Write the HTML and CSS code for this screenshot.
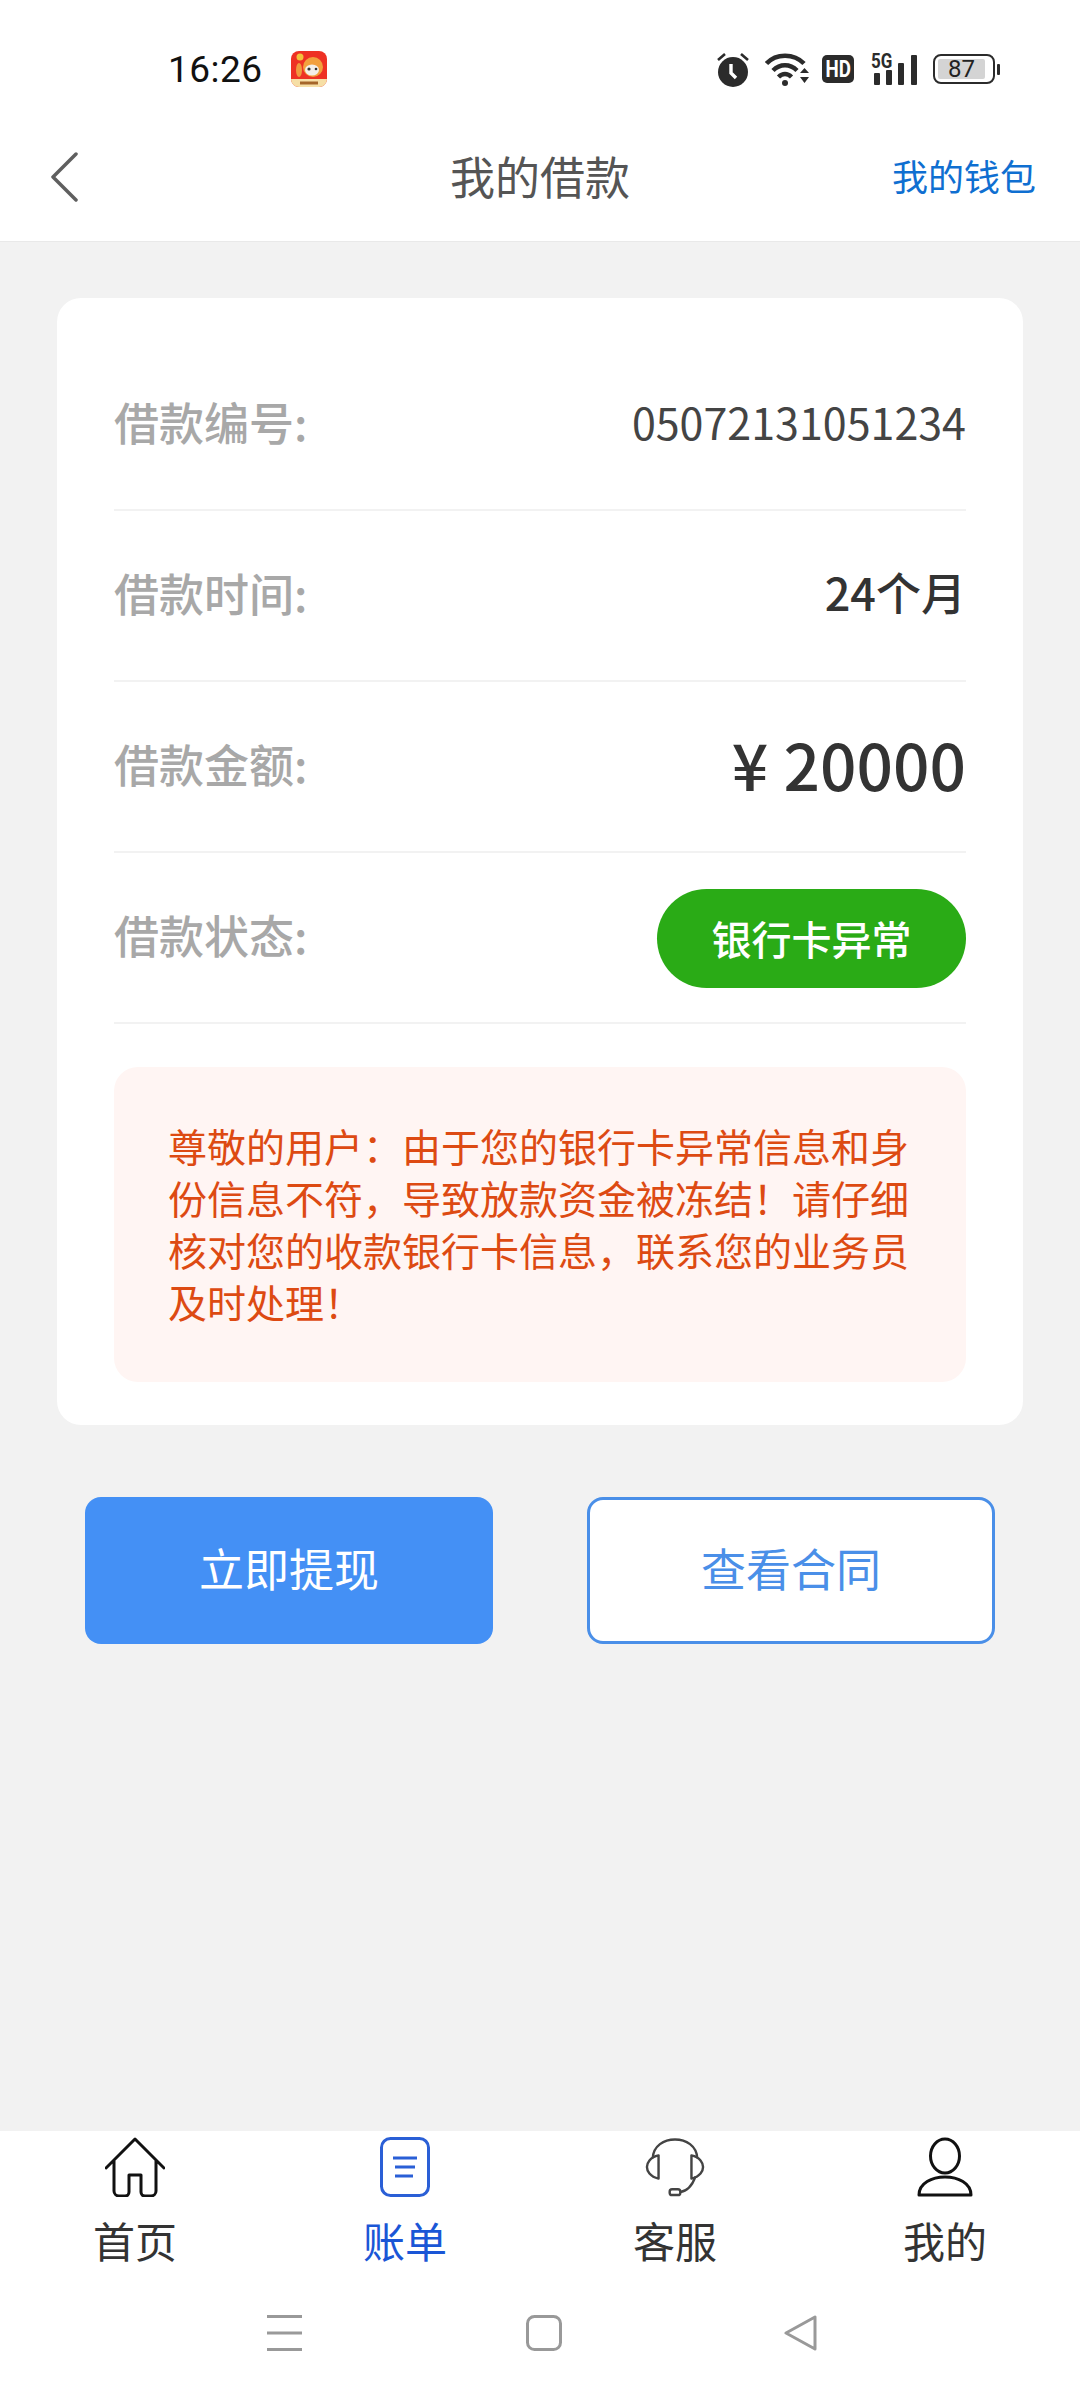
FILE: index.html
```html
<!DOCTYPE html>
<html lang="zh-CN">
<head>
<meta charset="utf-8">
<title>我的借款</title>
<link rel="stylesheet" href="styles.css">
</head>
<body>
<div class="page">
  <div class="status">
    <span class="time">16:26</span>
    <svg class="appicon" viewBox="0 0 36 36">
      <defs><clipPath id="r"><rect width="36" height="36" rx="8"/></clipPath></defs>
      <g clip-path="url(#r)">
        <rect width="36" height="36" fill="#ee3124"/>
        <rect y="28" width="36" height="8" fill="#f6dfa6"/>
        <circle cx="9" cy="6" r="3.5" fill="#f3c23c"/>
        <ellipse cx="8" cy="19" rx="3" ry="7" fill="#f09a3e"/>
        <circle cx="22" cy="16" r="10" fill="#f2a03d"/>
        <ellipse cx="21" cy="19" rx="7" ry="5.5" fill="#f4efe8"/>
        <circle cx="18" cy="18" r="1.6" fill="#333"/>
        <circle cx="25" cy="18" r="1.3" fill="#333"/>
        <rect x="9" y="30.5" width="18" height="3" fill="#a5662a"/>
      </g>
    </svg>
    <span class="spacer"></span>
    <svg class="alarm" viewBox="0 0 32 36">
      <path d="M1 9l7-6M31 9l-7-6" stroke="#2b2b2b" stroke-width="2.6" fill="none"/>
      <circle cx="16" cy="21" r="15" fill="#2b2b2b"/>
      <path d="M14 13v9l5 5" stroke="#fff" stroke-width="3.4" fill="none"/>
    </svg>
    <svg class="wifi" viewBox="0 0 45 34">
      <path d="M1.500 11.500C11 1 29 1 39 11.500" stroke="#2b2b2b" stroke-width="4.500" fill="none"/>
      <path d="M8 18.500C15 11.500 25 11.500 32 18.500" stroke="#2b2b2b" stroke-width="4.500" fill="none"/>
      <path d="M13.500 25C17.500 21 22.500 21 26.500 25" stroke="#2b2b2b" stroke-width="4.500" fill="none"/>
      <circle cx="20" cy="31" r="3" fill="#2b2b2b"/>
      <path d="M35 21l4.500-5 4.500 5zM35 25h9l-4.500 6z" fill="#2b2b2b"/>
    </svg>
    <span class="hd"><span class="hd-text">HD</span></span>
    <span class="signal">
      <span class="fiveg">5G</span>
      <svg class="bars" viewBox="0 0 43 32">
        <rect x="0" y="20" width="6" height="12" rx="1" fill="#2b2b2b"/>
        <rect x="12" y="17" width="6" height="15" rx="1" fill="#2b2b2b"/>
        <rect x="24" y="10" width="6" height="22" rx="1" fill="#2b2b2b"/>
        <rect x="37" y="2" width="6" height="30" rx="1" fill="#2b2b2b"/>
      </svg>
    </span>
    <span class="battery"><span class="level">87</span></span>
    <span class="nub"></span>
  </div>

  <header class="topbar">
    <svg class="back" viewBox="0 0 28 50"><path d="M26 2L3 25l23 23" fill="none" stroke="#5f5f5f" stroke-width="3.500" stroke-linecap="round" stroke-linejoin="round"/></svg>
    <h1 class="title">我的借款</h1>
    <a class="wallet">我的钱包</a>
  </header>

  <main class="content">
    <section class="card">
      <div class="row"><span class="label">借款编号:</span><span class="val">05072131051234</span></div>
      <div class="row"><span class="label">借款时间:</span><span class="val strong">24个月</span></div>
      <div class="row"><span class="label">借款金额:</span><span class="val amount">¥ 20000</span></div>
      <div class="row"><span class="label">借款状态:</span><span class="pill">银行卡异常</span></div>
      <p class="notice">尊敬的用户：由于您的银行卡异常信息和身份信息不符，导致放款资金被冻结！请仔细核对您的收款银行卡信息，联系您的业务员及时处理！</p>
    </section>
    <div class="actions">
      <button class="btn primary">立即提现</button>
      <button class="btn outline">查看合同</button>
    </div>
  </main>

  <nav class="tabs">
    <div class="tab">
      <svg class="tabicon" viewBox="0 0 60 60"><path d="M1 31L30 2l29 29M9 24v30a5 5 0 0 0 5 5h6a4 4 0 0 0 4-4V38h12v17a4 4 0 0 0 4 4h6a5 5 0 0 0 5-5V24" fill="none" stroke="#111" stroke-width="3" stroke-linecap="round" stroke-linejoin="round"/></svg>
      <span>首页</span>
    </div>
    <div class="tab active">
      <svg class="tabicon" viewBox="0 0 60 60"><rect x="6.500" y="1.500" width="47" height="57" rx="9" fill="none" stroke="#2a5fd6" stroke-width="3"/><path d="M18 21h24M20 30h20M20 39h18" stroke="#2a5fd6" stroke-width="3"/></svg>
      <span>账单</span>
    </div>
    <div class="tab">
      <svg class="tabicon" viewBox="0 0 60 62"><path d="M7 22C8 -4 52 -4 53 22" fill="none" stroke="#444" stroke-width="2.500"/><path d="M13 19v24C4 41 1 35 1 31s3-10 12-12zM47 19v24c9-2 12-8 12-12s-3-10-12-12z" fill="none" stroke="#444" stroke-width="2.500" stroke-linejoin="round"/><path d="M51 41C48 50 42 56 35 57" fill="none" stroke="#444" stroke-width="2.500"/><rect x="24.500" y="54" width="11" height="6" rx="2.500" fill="none" stroke="#444" stroke-width="2.500"/></svg>
      <span>客服</span>
    </div>
    <div class="tab">
      <svg class="tabicon" viewBox="0 0 60 60"><ellipse cx="30" cy="19" rx="14.500" ry="17" fill="none" stroke="#111" stroke-width="3"/><path d="M4 58c0-24 52-24 52 0z" fill="none" stroke="#111" stroke-width="3" stroke-linejoin="round"/></svg>
      <span>我的</span>
    </div>
  </nav>

  <div class="sysnav">
    <svg class="nav-menu" viewBox="0 0 35 36"><path d="M0 1.500h35M0 18h35M0 34.500h35" stroke="#999" stroke-width="3"/></svg>
    <svg class="nav-home" viewBox="0 0 36 36"><rect x="1.500" y="1.500" width="33" height="33" rx="7" fill="none" stroke="#999" stroke-width="3"/></svg>
    <svg class="nav-back" viewBox="0 0 34 36"><path d="M2 18L31 2v32z" fill="none" stroke="#999" stroke-width="3" stroke-linejoin="round"/></svg>
  </div>
</div>
</body>
</html>
```

FILE: styles.css
```css
* { box-sizing: border-box; }
html, body { margin: 0; padding: 0; }
body { font-family: "Noto Sans CJK SC", "Noto Sans", sans-serif; background: #fff; }
.page { width: 1080px; height: 2400px; display: flex; flex-direction: column; background: #fff; }

.status { height: 120px; flex: none; display: flex; align-items: center; padding: 18px 80px 0 168px; color: #111; }
.time { font-family: Roboto, sans-serif; font-size: 37px; width: 123px; letter-spacing: 0.5px; }
.appicon { width: 36px; height: 36px; }
.spacer { flex: 1; }
.alarm { width: 32px; height: 36px; margin-right: 16px; }
.wifi { width: 45px; height: 34px; margin-right: 12px; }
.hd { width: 32px; height: 28px; border-radius: 5px; background: #2b2b2b; color: #fff; font: 700 24px/28px Roboto, sans-serif; text-align: center; margin-right: 17px; overflow: hidden; }
.hd-text { display: inline-block; transform: scaleX(0.78); margin-left: -4px; margin-right: -4px; }
.signal { position: relative; width: 46px; height: 32px; margin-right: 16px; }
.fiveg { position: absolute; left: 0; top: -2px; font: 700 20px/20px Roboto, sans-serif; color: #2b2b2b; transform: scaleX(0.85); transform-origin: left center; }
.bars { position: absolute; right: 0; bottom: 0; width: 43px; height: 32px; }
.battery { width: 62px; height: 30px; border: 2.500px solid #2b2b2b; border-radius: 8px; padding: 3px 8px 3px 3px; display: flex; }
.level { flex: 1; background: #d4d4d4; border-radius: 2px; font: 400 24px/20px Roboto, sans-serif; text-align: center; color: #222; }
.nub { width: 3px; height: 11px; background: #2b2b2b; margin-left: 2px; border-radius: 1px; }

.topbar { height: 122px; flex: none; display: flex; align-items: center; justify-content: space-between; position: relative; padding: 0 44px 8px 50px; border-bottom: 1px solid #e9e9e9; }
.back { width: 28px; height: 50px; }
.title { position: absolute; left: 0; right: 0; margin: 0; padding-bottom: 3px; text-align: center; font-size: 45px; font-weight: 400; color: #555; }
.wallet { font-size: 36px; color: #0f6fd1; padding-bottom: 3px; }

.content { flex: 1; background: #f2f2f2; padding: 56px 57px 0; display: flex; flex-direction: column; }
.card { background: #fff; border-radius: 24px; padding: 42px 57px 43px; }
.row { height: 171px; display: flex; align-items: center; justify-content: space-between; padding-bottom: 6px; border-bottom: 2px solid #f2f2f2; }
.label { font-size: 45px; color: #a8a8a8; font-weight: 500; }
.val { font-size: 43px; color: #444; padding-bottom: 2px; }
.strong { font-size: 45px; font-weight: 500; color: #333; }
.amount { font-size: 64px; font-weight: 500; color: #333; word-spacing: 1px; }
.pill { width: 309px; height: 99px; margin-top: 7px; border-radius: 50px; background: #2aab16; color: #fff; font-size: 40px; font-weight: 500; display: flex; align-items: center; justify-content: center; }
.notice { margin: 43px 0 0; background: #fff5f3; border-radius: 24px; padding: 52px 54px 55px; font-size: 39px; line-height: 52px; color: #dd4a12; }

.actions { display: flex; justify-content: space-between; padding: 72px 28px 0; }
.btn { width: 408px; height: 147px; border-radius: 16px; font-family: inherit; font-size: 45px; padding: 0 0 6px; }
.primary { background: #4490f5; border: none; color: #fff; }
.outline { background: #fff; border: 3px solid #4a8fe8; color: #4a8fe8; }

.tabs { height: 155px; flex: none; display: grid; grid-template-columns: repeat(4, 1fr); padding-top: 6px; background: #fff; }
.tab { display: flex; flex-direction: column; align-items: center; font-size: 42px; color: #333; line-height: 58px; }
.tabicon { width: 60px; height: 60px; margin-bottom: 14px; }
.active { color: #1a56d6; }

.sysnav { height: 114px; flex: none; display: flex; align-items: center; padding: 0 0 20px 267px; background: #fff; }
.nav-menu { width: 35px; height: 36px; margin-right: 224px; }
.nav-home { width: 36px; height: 36px; margin-right: 222px; }
.nav-back { width: 34px; height: 36px; }
```
